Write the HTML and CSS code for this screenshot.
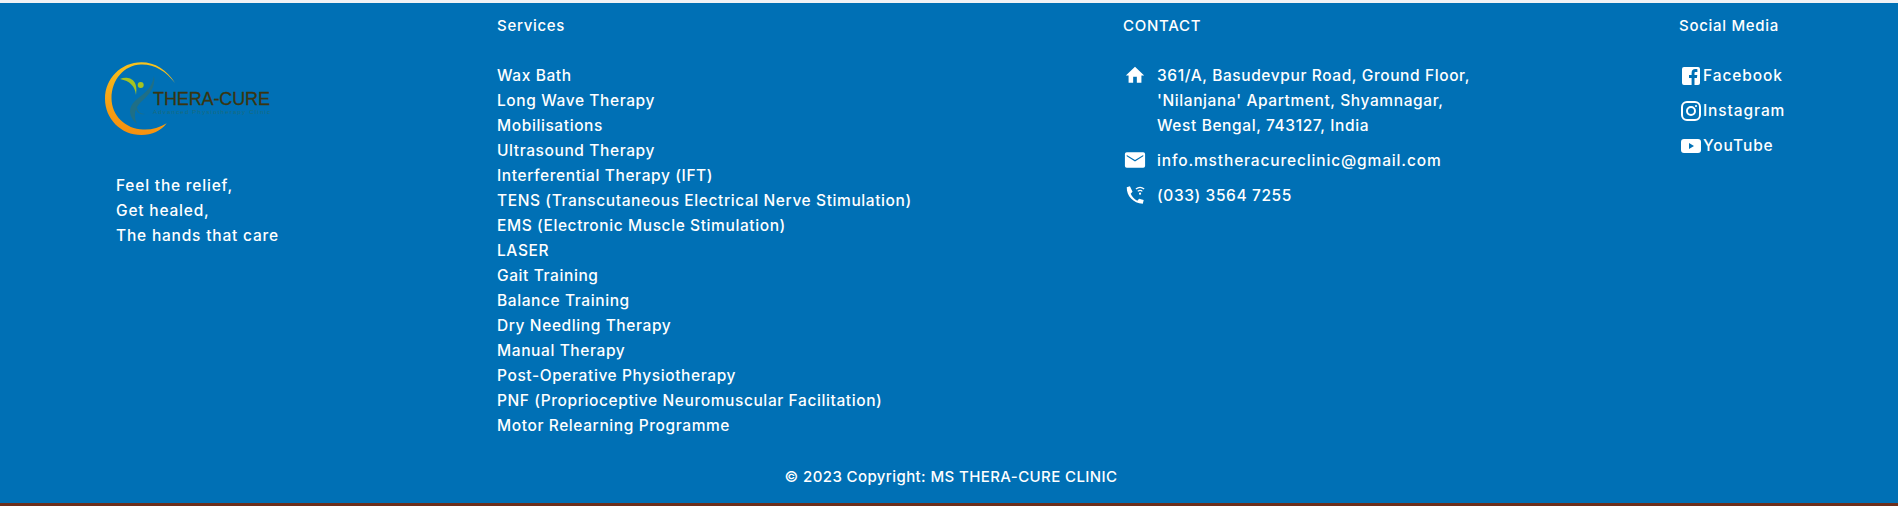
FILE: index.html
```html
<!DOCTYPE html>
<html lang="en">
<head>
    <meta charset="UTF-8">
    <meta name="viewport" content="width=device-width, initial-scale=1.0">
    <title>MS Thera-Cure Clinic</title>
    <link rel="stylesheet" href="styles.css">
</head>
<body>

<footer class="footer">
    <div class="footer-cols">
        <div class="col-brand">
            <svg class="logo" width="190" height="90" viewBox="0 0 190 90">
                <defs>
                    <linearGradient id="ring" x1="0.7" y1="0" x2="0.5" y2="1">
                        <stop offset="0" stop-color="#f7c51e"/>
                        <stop offset="1" stop-color="#f6900f"/>
                    </linearGradient>
                </defs>
                <path d="M70 30C62 17 50 9.300 36.400 9.300 16 9.300 0 25.600 0 45.700 0 65.800 16 82 36.400 82 47 82 56 78 61.700 70.300 54 75 46 77 38 76.500 21 76 6.500 63 6.500 45 6.500 27 19 12 36 11.500 49 11 61 18 70 30Z" fill="url(#ring)"/>
                <path d="M49 23C47 36 38 41 31 47 24 53 22 62 32 71 28 62 30 55 36 49 44 42 51 34 49 23Z" fill="#1f6f86"/>
                <path d="M32 53C32 58 35 61 40 61 36 62 31 60 31 55Z" fill="#1f6f86"/>
                <path d="M15 26C22 23 34 25 31 42 30 33 25 28 15 26Z" fill="#a5c321"/>
                <circle cx="35.700" cy="32" r="3" fill="#a5c321"/>
                <text class="logo-name" x="48" y="52" textLength="117">THERA-CURE</text>
                <text class="logo-sub" x="48" y="61" textLength="117">Advanced Physiotherapy Clinic</text>
            </svg>
            <p class="tagline">Feel the relief,<br>Get healed,<br>The hands that care</p>
        </div>

        <div class="col-services">
            <h6 class="col-title">Services</h6>
            <ul class="link-list">
                <li>Wax Bath</li>
                <li>Long Wave Therapy</li>
                <li>Mobilisations</li>
                <li>Ultrasound Therapy</li>
                <li>Interferential Therapy (IFT)</li>
                <li>TENS (Transcutaneous Electrical Nerve Stimulation)</li>
                <li>EMS (Electronic Muscle Stimulation)</li>
                <li>LASER</li>
                <li>Gait Training</li>
                <li>Balance Training</li>
                <li>Dry Needling Therapy</li>
                <li>Manual Therapy</li>
                <li>Post-Operative Physiotherapy</li>
                <li>PNF (Proprioceptive Neuromuscular Facilitation)</li>
                <li>Motor Relearning Programme</li>
            </ul>
        </div>

        <div class="col-contact">
            <h6 class="col-title">CONTACT</h6>
            <div class="contact-row">
                <svg class="contact-icon" viewBox="0 0 24 24"><path d="M10 20.500v-6.500h4v6.500h5v-8h3L12 3 2 12.500h3v8z"/></svg>
                <span>361/A, Basudevpur Road, Ground Floor,<br>'Nilanjana' Apartment, Shyamnagar,<br>West Bengal, 743127, India</span>
            </div>
            <div class="contact-row">
                <svg class="contact-icon" viewBox="0 0 24 24"><path d="M3 3.500h18a2 2 0 0 1 2 2v13a2 2 0 0 1-2 2H3a2 2 0 0 1-2-2v-13a2 2 0 0 1 2-2zM3 6.500V8l9 5.500L21 8V6.500l-9 5.500z" fill-rule="evenodd"/></svg>
                <span class="contact-email">info.mstheracureclinic@gmail.com</span>
            </div>
            <div class="contact-row">
                <svg class="contact-icon" viewBox="0 0 24 24">
                    <path d="M6.500 2.500 3 3.500C2.800 13 10 21 20.500 21.500l1-4-5-1.500-2 2.200C11.500 16.500 8.500 13.500 7.300 10.500l2-2z"/>
                    <path class="wifi" d="M13 5.500c3-2.500 6-2.500 9 0M15 8c2-1.500 3.500-1.500 5 0"/>
                    <circle cx="17.500" cy="10.500" r="1.200"/>
                </svg>
                <span>(033) 3564 7255</span>
            </div>
        </div>

        <div class="col-social">
            <h6 class="col-title">Social Media</h6>
            <div class="social-row">
                <svg class="social-icon" viewBox="0 0 20 20"><path d="M3 1h14a2 2 0 0 1 2 2v14a2 2 0 0 1-2 2h-3.500v-7h2.400l.4-3h-2.800V7.300c0-.9.300-1.400 1.400-1.400h1.500V3.200c-.4 0-1.200-.1-2.200-.1-2.200 0-3.600 1.300-3.600 3.800V9H8v3h2.600v7H3a2 2 0 0 1-2-2V3a2 2 0 0 1 2-2z"/></svg>
                <span>Facebook</span>
            </div>
            <div class="social-row">
                <svg class="social-icon" viewBox="0 0 20 20">
                    <rect class="ig" x="1" y="1" width="18" height="18" rx="5"/>
                    <circle class="ig" cx="10" cy="10" r="4"/>
                    <circle cx="15" cy="5" r="1.100"/>
                </svg>
                <span>Instagram</span>
            </div>
            <div class="social-row">
                <svg class="social-icon" viewBox="0 0 20 20"><path d="M3 3h14a3 3 0 0 1 3 3v8a3 3 0 0 1-3 3H3a3 3 0 0 1-3-3V6a3 3 0 0 1 3-3zm5 4v6l5-3z" fill-rule="evenodd"/></svg>
                <span>YouTube</span>
            </div>
        </div>
    </div>

    <p class="copyright">© 2023 Copyright: MS THERA-CURE CLINIC</p>
</footer>

</body>
</html>
```

FILE: styles.css
```css
body {
    margin: 0;
    background-color: #f0f2f5;
    font-family: "Inter", "Open Sans", Arial, sans-serif;
}

.footer {
    margin-top: 3px;
    height: 503px;
    box-sizing: border-box;
    background-color: #0070b5;
    border-bottom: 3px solid #6d2f1c;
    color: #fff;
    font-size: 15.500px;
    font-weight: 500;
    letter-spacing: 0.6px;
    line-height: 25px;
}

.footer-cols {
    display: grid;
    grid-template-columns: 497px 626px 556px 1fr;
    height: 453px;
    padding-top: 10px;
    box-sizing: border-box;
}

/* Brand column */
.col-brand {
    padding-left: 105px;
}

.logo {
    display: block;
    margin-top: 40px;
}

.logo-name {
    fill: #3a3510;
    stroke: #3a3510;
    stroke-width: 0.3;
    font-family: "Liberation Sans", Arial, sans-serif;
    font-size: 18px;
    font-weight: 400;
    letter-spacing: 0;
}

.logo-sub {
    fill: #1c6b7a;
    font-family: "Liberation Sans", Arial, sans-serif;
    font-size: 6px;
    font-weight: 400;
    letter-spacing: 0;
}

.tagline {
    margin: 30px 0 0 11px;
    letter-spacing: 0.8px;
}

/* Column headings */
.col-title {
    margin: 0 0 25px;
    font-size: 15px;
    font-weight: 500;
    letter-spacing: 0.7px;
    line-height: 25px;
}

/* Services */
.link-list {
    margin: 0;
    padding: 0;
    list-style: none;
}

/* Contact */
.contact-row {
    display: flex;
    gap: 11px;
    margin-bottom: 10px;
    padding-left: 1px;
}

.contact-icon {
    flex: none;
    width: 22px;
    height: 22px;
    margin-top: 1px;
    fill: #fff;
}

.contact-email {
    letter-spacing: 0.85px;
}

.wifi {
    fill: none;
    stroke: #fff;
    stroke-width: 1.300;
}

/* Social */
.social-row {
    display: flex;
    align-items: center;
    gap: 2px;
    height: 25px;
    margin-bottom: 10px;
    padding-left: 2px;
    letter-spacing: 0.9px;
}

.social-icon {
    flex: none;
    width: 20px;
    height: 20px;
    fill: #fff;
}

.ig {
    fill: none;
    stroke: #fff;
    stroke-width: 2;
}

.copyright {
    margin: 8px 0 0;
    padding-left: 4px;
    font-size: 15px;
    letter-spacing: 0.4px;
    text-align: center;
}
```
